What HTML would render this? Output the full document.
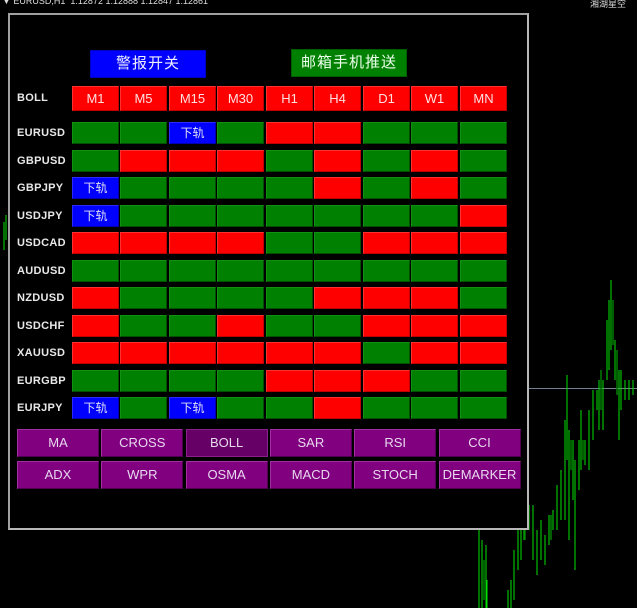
<!DOCTYPE html>
<html><head><meta charset="utf-8"><style>
*{margin:0;padding:0;box-sizing:border-box}
body{width:637px;height:608px;background:#000;position:relative;overflow:hidden;font-family:"Liberation Sans","Noto Sans CJK SC",sans-serif;color:#fff}
.a{position:absolute}
#panel{left:8px;top:13px;width:521px;height:517px;border:2px solid #b8b8b8;border-top-color:#a0a0a0;border-left-color:#a0a0a0;background:#000}
.lbl{position:absolute;left:17px;font-size:11px;font-weight:bold;color:#e8e8e8;letter-spacing:.3px}
.c{position:absolute;width:47px;height:22px;font-size:12px;color:#e0e0f0;text-align:center;line-height:21px;border:1px solid;}
.r{background:#ff0000;border-color:#ff3030 #c00000 #c00000 #ff3030}
.g{background:#008000;border-color:#129012 #005000 #005000 #129012}
.b{background:#0000ff;border-color:#2a2aff #0000b0 #0000b0 #2a2aff}
.h{height:25px;line-height:24px;font-size:13px;color:#ffe0e0}
.p{position:absolute;width:82px;height:28px;background:#800080;border:1px solid;border-color:#a030a0 #500050 #500050 #a030a0;font-size:13px;color:#e8d8ee;text-align:center;line-height:26px}
</style></head><body>
<div class="a" style="left:2px;top:-4px;font-size:9px;color:#ddd">▼ EURUSD,H1&nbsp; 1.12872 1.12888 1.12847 1.12861</div>
<div class="a" style="left:590px;top:-3px;font-size:9px;color:#ddd">湘湖星空</div>
<svg class="a" style="left:0;top:0" width="637" height="608">
<line x1="528" y1="388.5" x2="637" y2="388.5" stroke="#708090" stroke-width="1"/>
<g stroke="#00e000" stroke-width="1">
<path d="M4 222V250M6 215V240M479 530V608M482 540V608M486 545V608M487 580V608M508 590V608M511 580V608M514 550V600M518 528V570M521 490V560M524 480V540M529 505V530M533 505V560M537 530V575M541 520V560M545 535V565M549 515V545M553 510V530M557 485V530M561 470V520M565 420V520M567 375V460M569 430V540M573 440V500M575 460V570M579 440V490M581 410V470M585 440V465M589 410V470M593 390V440M597 390V410M599 380V430M603 380V430M607 320V380M609 300V370M611 280V350M615 340V380M619 370V440M621 370V410M625 380V400M629 380V400M633 380V395"/>
</g>
<g stroke="#007a00" stroke-width="1.5">
<path d="M484 560V600M525 495V540M551 515V540M571 440V470M583 440V460M601 370V410M613 300V345M617 350V395"/>
</g>
</svg>
<div id="panel" class="a"></div>
<div class="a" style="left:90px;top:50px;width:116px;height:28px;background:#0000ff;border:1px solid #0000c0;font-size:15px;text-align:center;line-height:26px;letter-spacing:1px;color:#eef">警报开关</div>
<div class="a" style="left:291px;top:49px;width:116px;height:28px;background:#008000;border:1px solid #006000;font-size:15px;text-align:center;line-height:26px;letter-spacing:1px;color:#efe">邮箱手机推送</div>
<div class="lbl" style="top:92px">BOLL</div>
<div class="c r h" style="left:72px;top:86px">M1</div><div class="c r h" style="left:120px;top:86px">M5</div><div class="c r h" style="left:169px;top:86px">M15</div><div class="c r h" style="left:217px;top:86px">M30</div><div class="c r h" style="left:266px;top:86px">H1</div><div class="c r h" style="left:314px;top:86px">H4</div><div class="c r h" style="left:363px;top:86px">D1</div><div class="c r h" style="left:411px;top:86px">W1</div><div class="c r h" style="left:460px;top:86px">MN</div>
<div id="grid"></div>
<script>
var rows=[["EURUSD","ggbgrrggg"],["GBPUSD","grrrgrgrg"],["GBPJPY","bggggrgrg"],["USDJPY","bgggggggr"],["USDCAD","rrrrggrrr"],["AUDUSD","ggggggggg"],["NZDUSD","rggggrrrg"],["USDCHF","rggrggrrr"],["XAUUSD","rrrrrrgrr"],["EURGBP","ggggrrrgg"],["EURJPY","bgbggrggg"]];
var xs=[72,120,169,217,266,314,363,411,460],h="";
rows.forEach(function(r,i){var y=Math.round(122+i*27.5);h+='<div class="lbl" style="top:'+(y+5)+'px">'+r[0]+'</div>';
for(var j=0;j<9;j++){var t=r[1][j];h+='<div class="c '+t+'" style="left:'+xs[j]+'px;top:'+y+'px">'+(t=="b"?"下轨":"")+'</div>';}});
var b=[["MA","CROSS","BOLL","SAR","RSI","CCI"],["ADX","WPR","OSMA","MACD","STOCH","DEMARKER"]];
b.forEach(function(r,i){r.forEach(function(n,j){var s=(n=="BOLL")?'background:#660066;border-color:#8a208a;':'';h+='<div class="p" style="left:'+(17+j*84.3)+'px;top:'+(429+i*32)+'px;'+s+'">'+n+'</div>';});});
document.getElementById("grid").innerHTML=h;
</script>
</body></html>
